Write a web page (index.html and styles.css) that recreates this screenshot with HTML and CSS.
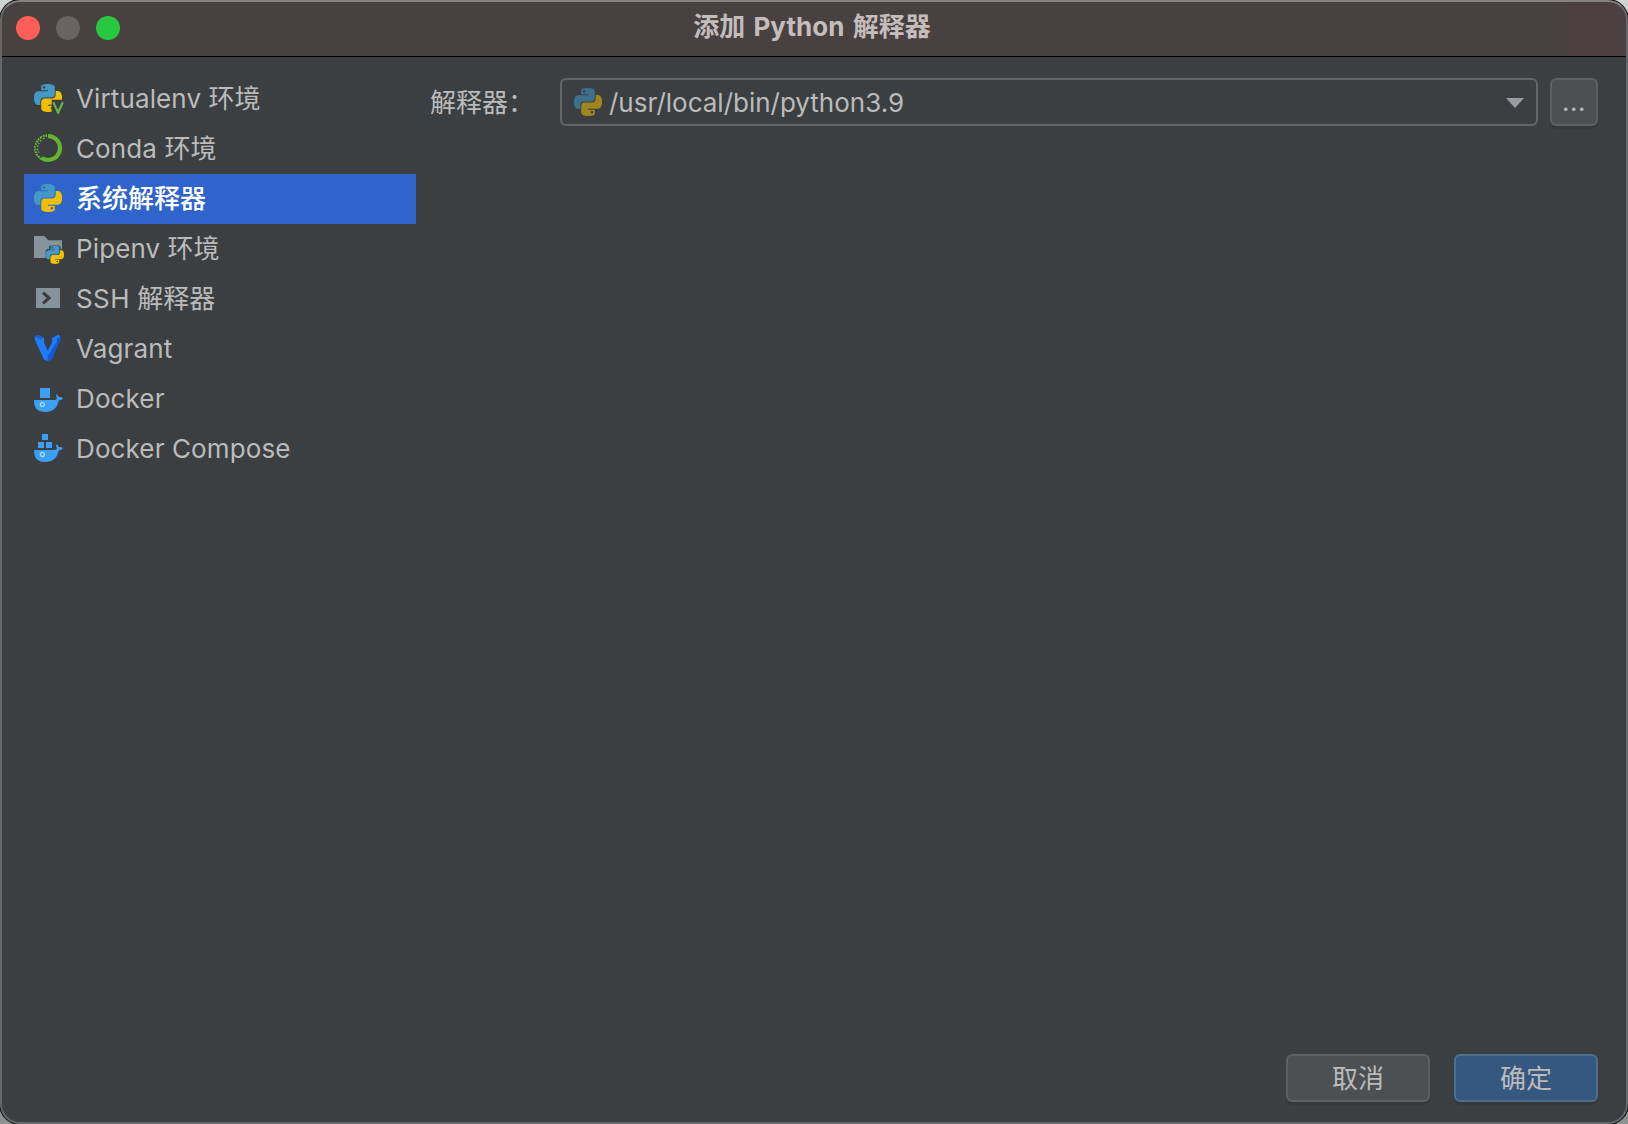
FILE: index.html
```html
<!DOCTYPE html>
<html lang="zh-CN">
<head>
<meta charset="utf-8">
<title>添加 Python 解释器</title>
<link rel="stylesheet" href="styles.css">
</head>
<body>
<svg class="defs" width="0" height="0" aria-hidden="true">
  <defs>
    <symbol id="python" viewBox="0 0 24 24">
      <path class="py-blue" d="M14.25.18l.9.2.73.26.59.3.45.32.34.34.25.34.16.33.1.3.04.26.02.2-.01.13V8.5l-.05.63-.13.55-.21.46-.26.38-.3.31-.33.25-.35.19-.35.14-.33.1-.3.07-.26.04-.21.02H8.77l-.69.05-.59.14-.5.22-.41.27-.33.32-.27.35-.2.36-.15.37-.1.35-.07.32-.04.27-.02.21v3.06H3.17l-.21-.03-.28-.07-.32-.12-.35-.18-.36-.26-.36-.36-.35-.46-.32-.59-.28-.73-.21-.88-.14-1.05-.05-1.23.06-1.22.16-1.04.24-.87.32-.71.36-.57.4-.44.42-.33.42-.24.4-.16.36-.1.32-.05.24-.01h.16l.06.01h8.16v-.83H6.18l-.01-2.75-.02-.37.05-.34.11-.31.17-.28.25-.26.31-.23.38-.2.44-.18.51-.15.58-.12.64-.1.71-.06.77-.04.84-.02 1.27.05zm-6.3 1.98l-.23.33-.08.41.08.41.23.34.33.22.41.09.41-.09.33-.22.23-.34.08-.41-.08-.41-.23-.33-.33-.22-.41-.09-.41.09z"/>
      <path class="py-yellow" d="M21.04 6.11l.28.06.32.12.35.18.36.27.36.35.35.47.32.59.28.73.21.88.14 1.04.05 1.23-.06 1.23-.16 1.04-.24.86-.32.71-.36.57-.4.45-.42.33-.42.24-.4.16-.36.09-.32.05-.24.02-.16-.01h-8.22v.82h5.84l.01 2.76.02.36-.05.34-.11.31-.17.29-.25.25-.31.24-.38.2-.44.17-.51.15-.58.13-.64.09-.71.07-.77.04-.84.01-1.27-.04-1.07-.14-.9-.2-.73-.25-.59-.3-.45-.33-.34-.34-.25-.34-.16-.33-.1-.3-.04-.25-.02-.2.01-.13v-5.34l.05-.64.13-.54.21-.46.26-.38.3-.32.33-.24.35-.2.35-.14.33-.1.3-.06.26-.04.21-.02.13-.01h5.84l.69-.05.59-.14.5-.21.41-.28.33-.32.27-.35.2-.36.15-.36.1-.35.07-.32.04-.28.02-.21V6.07h2.09l.14.01zM14.6 20.05l-.23.33-.08.41.08.41.23.33.33.23.41.08.41-.08.33-.23.23-.33.08-.41-.08-.41-.23-.33-.33-.23-.41-.08-.41.08z"/>
    </symbol>
    <symbol id="whale" viewBox="0 0 32 32">
      <path class="docker" d="M2 18h20.500c1.500 0 2.300-.8 2.400-2-.9-1.200-1-2.500-.3-3.700 1.300.8 2 1.700 2.100 2.900 1.500-.3 3-.1 4.300.8-.8 1.600-2.300 2.300-4.300 2.300C25.500 26 21 30 13 30 5.500 30 2 26 2 18z"/>
      <circle class="eye" cx="10.400" cy="22.400" r="2"/>
    </symbol>
    <clipPath id="badge-cut"><path d="M0 0h32v17.700H19.700V32H0z"/></clipPath>
  </defs>
</svg>

<div class="window">
  <header class="titlebar">
    <div class="lights"><i class="close"></i><i class="minimize"></i><i class="maximize"></i></div>
    <h1>添加 <span class="title-latin">Python</span> 解释器</h1>
  </header>

  <main class="content">
    <ul class="types">
      <li>
        <svg class="icon" viewBox="0 0 32 32"><g clip-path="url(#badge-cut)"><use href="#python" x="2" y="2" width="28" height="28"/></g><path class="venv" d="M21.400 20.300l4.700 10.500 4.700-10.500"/></svg>
        <span class="name"><span class="latin">Virtualenv</span> 环境</span>
      </li>
      <li>
        <svg class="icon" viewBox="0 0 32 32"><path class="ring" d="M16 4.100a11.900 11.900 0 1 1-6.400 21.900"/><path class="flecks" d="M10.500 3.200l2-.8.6 1.800-2 .8zM13.600 2.200l1.400-.1v3l-1.300.2zM7.500 5l2-1.300.7 2-1.800 1.500zM10.500 6.300l2-.9.5 1.300-1.900.8zM5.300 7.200l1.300-1.300 1.200 1.700-1.500 1.200zM3.700 9.500l1.100-1.600 1.700 1.800-1.200 1.400zM7.400 9l1.600-1.600.8 1-1.400 1.500zM2.700 12.200l.7-1.800 1.600 1.500-.6 1.500zM5.800 11.700l.9-1.300 1 .9-.8 1.500zM2 15.500l.2-2 1.900 1-.1 1.600zM4.900 14.800l.5-1.700 1.100.7-.3 1.800zM2.100 18.200l-.1-1.700 2.200.5.3 1.600zM5 18.300l-.1-1.700 1.300.2.2 1.700zM3 21.100l-.7-1.900 2.400.4.700 1.500zM4.300 23.700l-1-1.700 2.400-.2 1 1.400zM6.300 20.700l-.6-1.400 1.200-.1.600 1.500zM6.300 26l-1.400-1.600 2.500-.6 1.300 1.300zM8.400 27.700L7 26.600l1.900-1 1.500 1z"/></svg>
        <span class="name"><span class="latin">Conda</span> 环境</span>
      </li>
      <li class="selected">
        <svg class="icon" viewBox="0 0 32 32"><use href="#python" x="2" y="2" width="28" height="28"/></svg>
        <span class="name">系统解释器</span>
      </li>
      <li>
        <svg class="icon" viewBox="0 0 32 32"><path class="gray" d="M2 4h10.300l4 4.300H30V26H2z"/><use class="halo" href="#python" x="13.700" y="13.500" width="18.300" height="18.500"/><use href="#python" x="13.700" y="13.500" width="18.300" height="18.500"/></svg>
        <span class="name"><span class="latin">Pipenv</span> 环境</span>
      </li>
      <li>
        <svg class="icon" viewBox="0 0 32 32"><path class="gray" d="M4 6h24v20H4z"/><path class="prompt" d="M11 10.600l6 5.400-6 5.400"/></svg>
        <span class="name"><span class="latin caps">SSH</span> 解释器</span>
      </li>
      <li>
        <svg class="icon" viewBox="0 0 32 32"><path class="v-dark" d="M22.500 4.700L26 3l2.300 1.600v3.200L19.300 28 15.700 29l-1.200-8 5.700-10.500V6z"/><path class="v-light" d="M3 4.600L5.800 3 12 5.700v4.800l3.800 8.500 4.400-8.500V6L26 3l2.300 1.600-3.300 1.900v3.200L17.500 27l-1.800 2-3.800-1.500L3 7.700z"/><path class="v-dark" d="M3 4.600L5.800 3 12 5.700 9 7.300zM25 6.500l3.300-1.900v3.200L19.300 28l-3.600 1v-5.500L24.800 9.700z"/></svg>
        <span class="name latin">Vagrant</span>
      </li>
      <li>
        <svg class="icon" viewBox="0 0 32 32"><path class="docker" d="M8 6h10v10H8z"/><use href="#whale" width="32" height="32"/></svg>
        <span class="name latin">Docker</span>
      </li>
      <li>
        <svg class="icon" viewBox="0 0 32 32"><path class="docker" d="M10 2h6v6h-6zM6 10h6v6H6zM14 10h6v6h-6z"/><use href="#whale" width="32" height="32"/></svg>
        <span class="name latin">Docker Compose</span>
      </li>
    </ul>

    <section class="form">
      <label>解释器：</label>
      <div class="combo">
        <svg class="icon dim" viewBox="0 0 32 32"><use href="#python" x="2" y="2" width="28" height="28"/></svg>
        <span class="path">/usr/local/bin/python3.9</span>
        <svg class="arrow" viewBox="0 0 18 10"><path d="M0 0h18L9 10z"/></svg>
      </div>
      <button class="browse">...</button>
    </section>
  </main>

  <footer class="actions">
    <button>取消</button>
    <button class="primary">确定</button>
  </footer>
</div>
</body>
</html>
```
FILE: styles.css
```css
* { box-sizing: border-box; }

body {
  margin: 0;
  width: 1628px;
  height: 1124px;
  overflow: hidden;
  background: linear-gradient(#cfd3d1, #8f9090);
  font: 26px/32px Inter, "Noto Sans CJK SC", sans-serif;
  color: #bbb;
}

.defs { position: absolute; }

.window {
  position: relative;
  display: flex;
  flex-direction: column;
  height: 1124px;
  border-radius: 20px;
  overflow: hidden;
  background: #3c3f41;
  box-shadow: 0 0 0 1px #111;
}

/* Light rim drawn over the whole window */
.window::after {
  content: "";
  position: absolute;
  inset: 0;
  border: 2px solid #656768;
  border-top-color: #858180;
  border-radius: 20px;
  pointer-events: none;
}

.titlebar {
  display: flex;
  align-items: center;
  flex: none;
  height: 57px;
  padding: 0 16px;
  border-bottom: 1px solid #000;
  background: linear-gradient(90deg, #484141 0 1567px, #4d4042 1567px);
}

.lights { display: flex; gap: 16px; width: 200px; }
.lights i { width: 24px; height: 24px; border-radius: 50%; }
.close { background: #ff5f57; }
.minimize { background: #696362; }
.maximize { background: #28c840; }

h1 {
  flex: 1;
  margin: 0 204px 3px 0;
  text-align: center;
  font-size: 26px;
  font-weight: 700;
  line-height: 32px;
  word-spacing: 2px;
  color: #c3bdbc;
}
.title-latin { letter-spacing: .05px; }

.content { display: flex; flex: 1; }

.types {
  flex: none;
  width: 392px;
  margin: 17px 0 0 24px;
  padding: 0;
  list-style: none;
}
.types li {
  display: flex;
  align-items: center;
  gap: 12px;
  height: 50px;
  padding: 0 8px 2px;
}
.types .selected { background: #2f65ca; color: #fff; font-weight: 500; }
.name { padding-top: 2px; }
.latin { letter-spacing: .12px; }
.caps { letter-spacing: .4px; }

.icon { flex: none; width: 32px; height: 32px; }
.dim { opacity: .55; }
.py-blue { fill: #4398c8; }
.py-yellow { fill: #f0bf00; }
.venv { fill: none; stroke: #62b543; stroke-width: 2.2; }
.ring { fill: none; stroke: #62b52f; stroke-width: 4.200; }
.flecks { fill: #62b52f; }
.gray { fill: #87939a; }
.halo { stroke: #3c3f41; stroke-width: 3.500px; }
.prompt { fill: none; stroke: #3c3f41; stroke-width: 3.200; }
.v-light { fill: #1c7dff; }
.v-dark { fill: #1559d4; }
.docker { fill: #3a9ff5; }
.eye { fill: none; stroke: #b5dcfb; stroke-width: 1.300; }

.form {
  display: flex;
  flex: 1;
  align-items: flex-start;
  padding: 21px 30px 0 14px;
}
label { width: 130px; line-height: 50px; white-space: nowrap; }

.combo {
  display: flex;
  align-items: center;
  flex: 1;
  height: 48px;
  padding: 0 12px 0 10px;
  border: 2px solid #646464;
  border-radius: 6px;
}
.combo .icon { margin-bottom: 1px; }
.path { flex: 1; margin-left: 5px; padding-top: 2px; }
.arrow { width: 18px; height: 10px; margin-top: 2px; fill: #9a9da0; }

button {
  height: 48px;
  padding: 0;
  border: 2px solid #5e6060;
  border-radius: 6px;
  background: #4c5052;
  box-shadow: 0 3px 1px #36393a;
  color: #bbb;
  font: inherit;
}
.browse { width: 48px; margin-left: 12px; letter-spacing: .5px; }

.actions {
  display: flex;
  justify-content: flex-end;
  gap: 24px;
  padding: 0 30px 22px;
}
.actions button { width: 144px; padding-top: 1px; }
.actions .primary { background: #365880; border-color: #4c708c; }
```
